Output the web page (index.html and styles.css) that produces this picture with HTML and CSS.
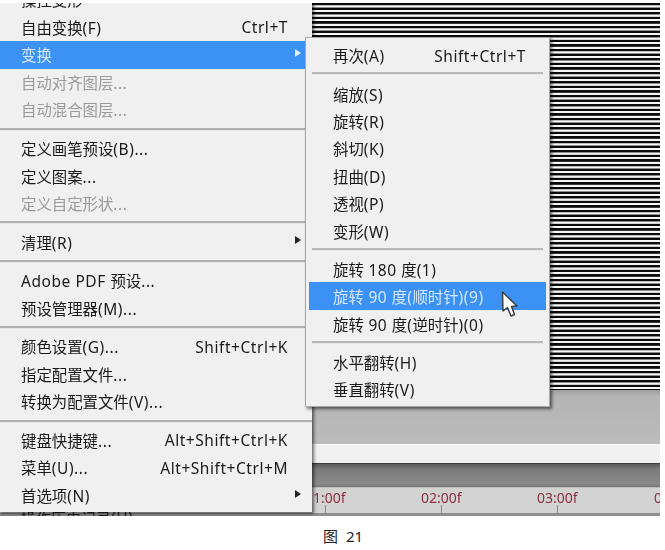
FILE: index.html
```html
<!DOCTYPE html>
<html lang="zh-CN">
<head>
<meta charset="utf-8">
<title>图 21</title>
<link rel="stylesheet" href="styles.css">
</head>
<body>
<div class="shot">
  <div class="stripes"></div>
  <div class="panel"></div>
  <div class="strip"></div>
  <div class="bar"></div>
  <div class="ruler">
    <span class="mark m1">1:00f</span><span class="mark m2">02:00f</span><span class="mark m3">03:00f</span><span class="mark m4">04:00f</span>
    <i class="tick t1"></i><i class="tick t2"></i><i class="tick t3"></i>
  </div>
  <div class="cutoff">操作历史记录<span class="l">(H)</span></div>

  <div class="menu main">
    <div class="row clip"><span>操控变形</span></div>
    <div class="row"><span>自由变换<span class="l">(F)</span></span><span class="l">Ctrl+T</span></div>
    <div class="row active"><span>变换</span><i class="arrow"></i></div>
    <div class="row off"><span>自动对齐图层<span class="l">...</span></span></div>
    <div class="row off"><span>自动混合图层<span class="l">...</span></span></div>
    <div class="sep"></div>
    <div class="row"><span>定义画笔预设<span class="l">(B)...</span></span></div>
    <div class="row"><span>定义图案<span class="l">...</span></span></div>
    <div class="row off"><span>定义自定形状<span class="l">...</span></span></div>
    <div class="sep"></div>
    <div class="row"><span>清理<span class="l">(R)</span></span><i class="arrow"></i></div>
    <div class="sep"></div>
    <div class="row"><span><span class="l">Adobe PDF </span>预设<span class="l">...</span></span></div>
    <div class="row"><span>预设管理器<span class="l">(M)...</span></span></div>
    <div class="sep"></div>
    <div class="row"><span>颜色设置<span class="l">(G)...</span></span><span class="l">Shift+Ctrl+K</span></div>
    <div class="row"><span>指定配置文件<span class="l">...</span></span></div>
    <div class="row"><span>转换为配置文件<span class="l">(V)...</span></span></div>
    <div class="sep"></div>
    <div class="row"><span>键盘快捷键<span class="l">...</span></span><span class="l">Alt+Shift+Ctrl+K</span></div>
    <div class="row"><span>菜单<span class="l">(U)...</span></span><span class="l">Alt+Shift+Ctrl+M</span></div>
    <div class="row"><span>首选项<span class="l">(N)</span></span><i class="arrow"></i></div>
  </div>

  <div class="menu sub">
    <div class="row"><span>再次<span class="l">(A)</span></span><span class="l">Shift+Ctrl+T</span></div>
    <div class="sep"></div>
    <div class="row"><span>缩放<span class="l">(S)</span></span></div>
    <div class="row"><span>旋转<span class="l">(R)</span></span></div>
    <div class="row"><span>斜切<span class="l">(K)</span></span></div>
    <div class="row"><span>扭曲<span class="l">(D)</span></span></div>
    <div class="row"><span>透视<span class="l">(P)</span></span></div>
    <div class="row"><span>变形<span class="l">(W)</span></span></div>
    <div class="sep"></div>
    <div class="row"><span>旋转<span class="l"> 180 </span>度<span class="l">(1)</span></span></div>
    <div class="row active"><span>旋转<span class="l"> 90 </span>度<span class="l">(</span>顺时针<span class="l">)(9)</span></span></div>
    <div class="row"><span>旋转<span class="l"> 90 </span>度<span class="l">(</span>逆时针<span class="l">)(0)</span></span></div>
    <div class="sep"></div>
    <div class="row"><span>水平翻转<span class="l">(H)</span></span></div>
    <div class="row"><span>垂直翻转<span class="l">(V)</span></span></div>
  </div>

  <svg class="cursor" width="18" height="27" viewBox="0 0 18 27" aria-hidden="true">
    <path d="M1.5 1 L2 20 L6.5 16.5 L10 25 L13.5 23.5 L10.5 15.5 L16 15 Z" fill="#fff" stroke="#3a3f48" stroke-width="1.5" stroke-linejoin="round"/>
  </svg>
</div>
<p class="caption">图 21</p>
</body>
</html>
```
FILE: styles.css
```css
* { box-sizing: border-box; }
html, body { margin: 0; padding: 0; background: #fff; }
body { width: 665px; height: 550px; overflow: hidden; font-family: "Noto Sans", "Noto Sans CJK SC", sans-serif; }

.shot {
  position: relative;
  width: 660px;
  height: 513px;
  margin-top: 3px;
  overflow: hidden;
  display: flex;
  flex-direction: column;
  filter: blur(0.4px);
}
.stripes {
  height: 387px;
  background: repeating-linear-gradient(to bottom, #0c0c0c 0, #0c0c0c 2px, #8a8a8a 2.3px, #f6f6f6 2.7px, #f6f6f6 4.2px, #6a6a6a 4.6px);
}
.panel { height: 54px; background: linear-gradient(to bottom, #9d9d9d, #b4b4b4 6px, #bcbcbc); }
.strip { height: 19px; background: #f1f1f1; border-top: 1px solid #fff; }
.bar { height: 25px; background: linear-gradient(to bottom, #5c5c5c, #7c7c7c 6px, #8a8a8a 20px, #777); border-top: 1px solid #3c3c3c; border-bottom: 1px solid #bdbdbd; }
.ruler { position: relative; height: 28px; background: #d3d3d3; border-bottom: 3px solid #8f8f8f; }
.mark { position: absolute; top: 1px; font-size: 14px; line-height: 17px; color: #8e2f3e; }
.m1 { left: 313px; }
.m2 { left: 421px; }
.m3 { left: 537px; }
.m4 { left: 654px; }
.tick { position: absolute; top: 17px; width: 1px; height: 9px; background: #8a8a8a; }
.t1 { left: 325px; }
.t2 { left: 441px; }
.t3 { left: 557px; }

.cutoff {
  position: absolute;
  left: 21px;
  top: 506px;
  font-size: 15px;
  line-height: 18px;
  color: #222;
}

.menu {
  position: absolute;
  display: flex;
  flex-direction: column;
  background: #f0f0f0;
  box-shadow: 2px 2px 3px rgba(0, 0, 0, 0.55);
  font-size: 15.4px;
  color: #1a1a1a;
}
.main { left: -2px; top: -18px; width: 314px; height: 527px; padding: 2px 0 0 2px; }
.sub { left: 305px; top: 34px; width: 245px; height: 370px; border: 1px solid #a8a8a8; padding: 3px 3px 2px; }

.l { font-size: 15.5px; letter-spacing: 0.55px; }

.row {
  flex: none;
  height: 27.55px;
  display: flex;
  align-items: center;
  justify-content: space-between;
  white-space: pre;
}
.main .row { padding: 0 24px 0 21px; }
.sub .row { height: 27.4px; padding: 2px 20px 0 24px; }
.row.active { background: #3c91f5; color: #d6e8fc; }
.row.off { color: #9a9a9a; }
.clip { margin-top: -1px; }

.sep { flex: none; height: 11px; display: flex; align-items: center; }
.sep::before { content: ""; display: block; width: 100%; height: 2px; background: #b0b0b0; border-bottom: 1px solid #e6e6e6; }
.sub .sep::before { margin: 0 3px; background: #b8b8b8; }

.arrow {
  display: block;
  width: 0;
  height: 0;
  margin: -4px -13px 0 0;
  border-left: 6px solid #222;
  border-top: 4.5px solid transparent;
  border-bottom: 4.5px solid transparent;
}
.active .arrow { border-left-color: #e8f2fd; }

.cursor { position: absolute; left: 501px; top: 288px; }

.caption {
  margin: 10px 0 0 323px;
  font-size: 15px;
  line-height: 20px;
  word-spacing: 4px;
  color: #222;
}
```
